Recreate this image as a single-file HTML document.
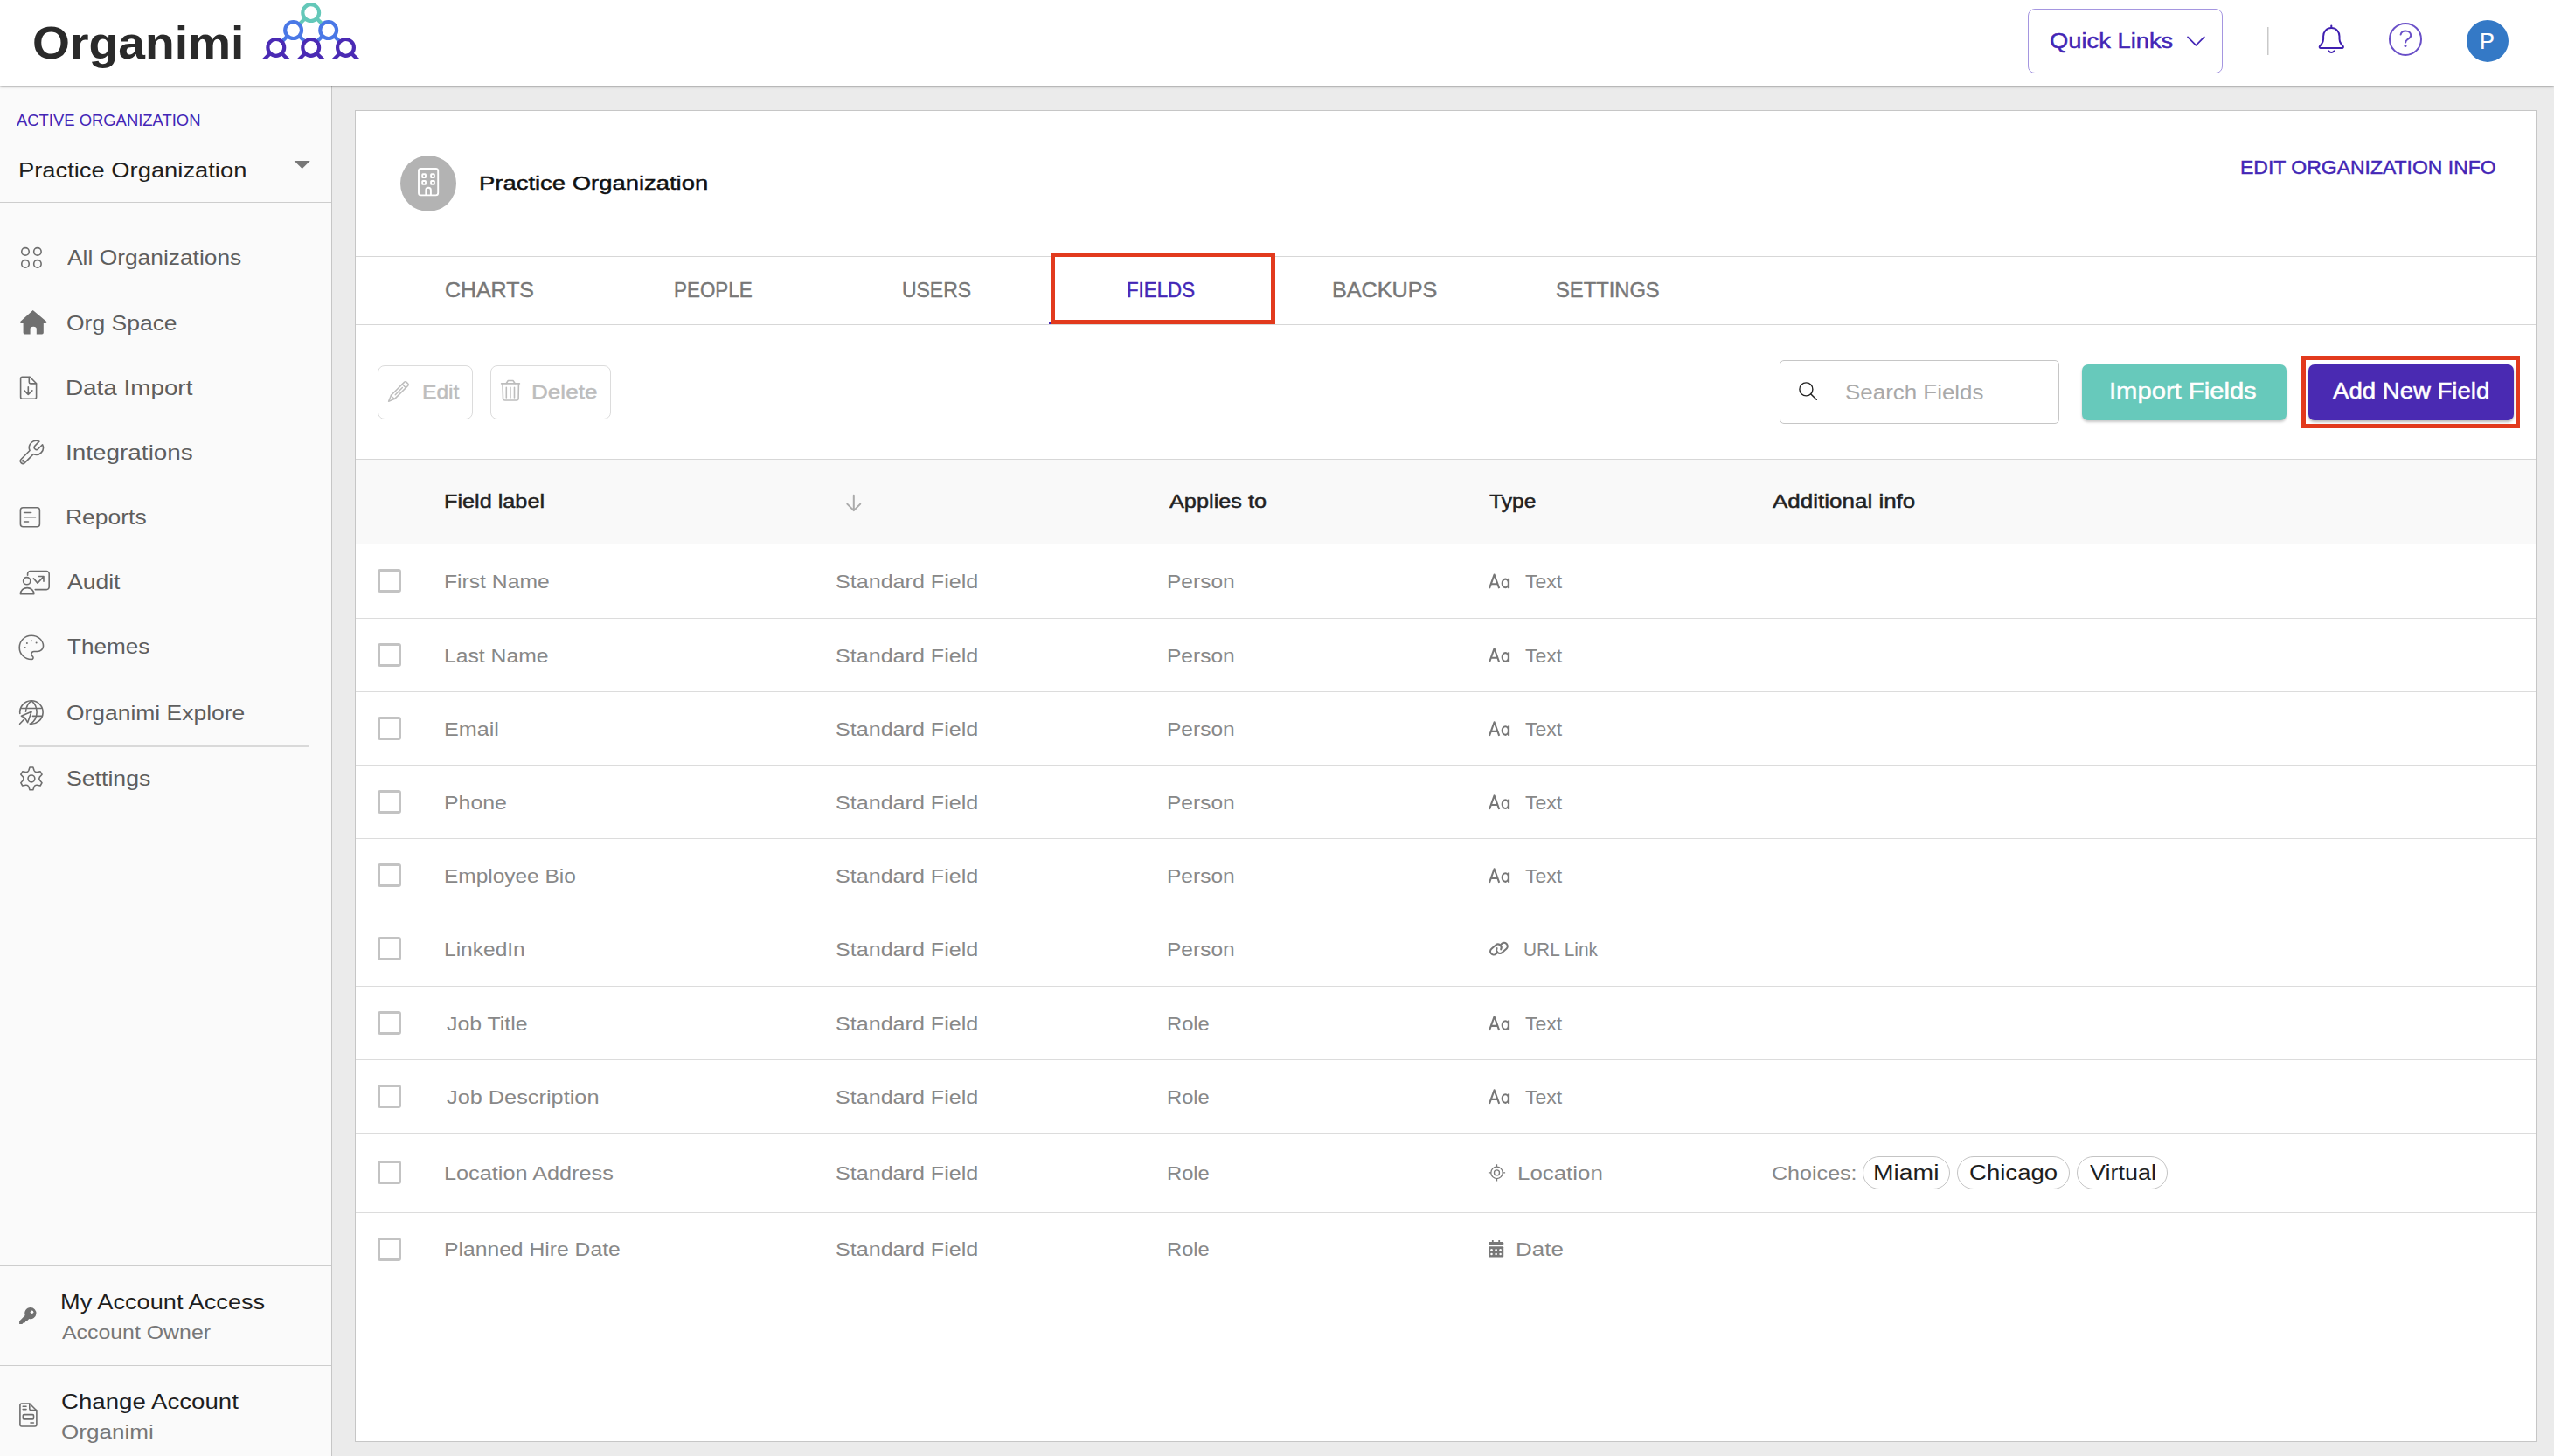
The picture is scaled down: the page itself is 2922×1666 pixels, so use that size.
<!DOCTYPE html><html><head><meta charset="utf-8"><title>Organimi - Fields</title><style>html,body{margin:0;padding:0}body{width:2922px;height:1666px;overflow:hidden;position:relative;background:#ebebeb;font-family:"Liberation Sans",sans-serif}.t{position:absolute;line-height:1;white-space:nowrap;transform-origin:0 0}</style></head><body><div style="position:absolute;left:0.0px;top:98.0px;width:379.0px;height:1568.0px;background:#fafafa;border-right:1px solid #c6c6c6;"></div><div style="position:absolute;left:0.0px;top:231.0px;width:379.0px;height:1.0px;background:#cdcdcd;"></div><div style="position:absolute;left:22.0px;top:853.0px;width:331.0px;height:1.5px;background:#d9d9d9;"></div><div style="position:absolute;left:0.0px;top:1448.0px;width:379.0px;height:1.0px;background:#cdcdcd;"></div><div style="position:absolute;left:0.0px;top:1562.0px;width:379.0px;height:1.0px;background:#cdcdcd;"></div><div style="position:absolute;left:406.0px;top:126.0px;width:2496.0px;height:1524.0px;box-sizing:border-box;background:#fff;border:1px solid #c6c6c6;"></div><div style="position:absolute;left:407.0px;top:293.0px;width:2494.0px;height:1.0px;background:#d7d7d7;"></div><div style="position:absolute;left:407.0px;top:371.0px;width:2494.0px;height:1.0px;background:#d7d7d7;"></div><div style="position:absolute;left:1200.0px;top:368.0px;width:256.0px;height:3.0px;background:#4326b6;"></div><div style="position:absolute;left:458.0px;top:178.0px;width:64.0px;height:64.0px;border-radius:50%;background:#b3b3b3;"></div><div style="position:absolute;left:432.0px;top:418.0px;width:109.0px;height:62.0px;box-sizing:border-box;border:1.5px solid #dcdcdc;border-radius:8px;"></div><div style="position:absolute;left:561.0px;top:418.0px;width:138.0px;height:62.0px;box-sizing:border-box;border:1.5px solid #dcdcdc;border-radius:8px;"></div><div style="position:absolute;left:2036.0px;top:412.0px;width:320.0px;height:73.0px;box-sizing:border-box;border:1.5px solid #c6c6c6;border-radius:5px;"></div><div style="position:absolute;left:2382.0px;top:417.0px;width:234.0px;height:64.0px;background:#67c9bb;border-radius:7px;box-shadow:0 2px 3px rgba(0,0,0,.22);"></div><div style="position:absolute;left:2641.0px;top:417.0px;width:235.0px;height:64.0px;background:#4a2ab2;border-radius:7px;box-shadow:0 2px 3px rgba(0,0,0,.28);"></div><div style="position:absolute;left:407.0px;top:525.0px;width:2494.0px;height:96.0px;background:#f9f9f9;border-top:1px solid #d7d7d7;border-bottom:1px solid #d7d7d7;"></div><div style="position:absolute;left:407.0px;top:707.0px;width:2494.0px;height:1.0px;background:#dcdcdc;"></div><div style="position:absolute;left:407.0px;top:791.0px;width:2494.0px;height:1.0px;background:#dcdcdc;"></div><div style="position:absolute;left:407.0px;top:875.0px;width:2494.0px;height:1.0px;background:#dcdcdc;"></div><div style="position:absolute;left:407.0px;top:959.0px;width:2494.0px;height:1.0px;background:#dcdcdc;"></div><div style="position:absolute;left:407.0px;top:1043.0px;width:2494.0px;height:1.0px;background:#dcdcdc;"></div><div style="position:absolute;left:407.0px;top:1128.0px;width:2494.0px;height:1.0px;background:#dcdcdc;"></div><div style="position:absolute;left:407.0px;top:1212.0px;width:2494.0px;height:1.0px;background:#dcdcdc;"></div><div style="position:absolute;left:407.0px;top:1296.0px;width:2494.0px;height:1.0px;background:#dcdcdc;"></div><div style="position:absolute;left:407.0px;top:1387.0px;width:2494.0px;height:1.0px;background:#dcdcdc;"></div><div style="position:absolute;left:407.0px;top:1471.0px;width:2494.0px;height:1.0px;background:#dcdcdc;"></div><div style="position:absolute;left:432.0px;top:651.1px;width:27.0px;height:27.0px;box-sizing:border-box;border:3px solid #c3c3c3;border-radius:3px;"></div><div style="position:absolute;left:432.0px;top:735.7px;width:27.0px;height:27.0px;box-sizing:border-box;border:3px solid #c3c3c3;border-radius:3px;"></div><div style="position:absolute;left:432.0px;top:819.8px;width:27.0px;height:27.0px;box-sizing:border-box;border:3px solid #c3c3c3;border-radius:3px;"></div><div style="position:absolute;left:432.0px;top:904.0px;width:27.0px;height:27.0px;box-sizing:border-box;border:3px solid #c3c3c3;border-radius:3px;"></div><div style="position:absolute;left:432.0px;top:987.8px;width:27.0px;height:27.0px;box-sizing:border-box;border:3px solid #c3c3c3;border-radius:3px;"></div><div style="position:absolute;left:432.0px;top:1072.2px;width:27.0px;height:27.0px;box-sizing:border-box;border:3px solid #c3c3c3;border-radius:3px;"></div><div style="position:absolute;left:432.0px;top:1156.8px;width:27.0px;height:27.0px;box-sizing:border-box;border:3px solid #c3c3c3;border-radius:3px;"></div><div style="position:absolute;left:432.0px;top:1240.8px;width:27.0px;height:27.0px;box-sizing:border-box;border:3px solid #c3c3c3;border-radius:3px;"></div><div style="position:absolute;left:432.0px;top:1328.2px;width:27.0px;height:27.0px;box-sizing:border-box;border:3px solid #c3c3c3;border-radius:3px;"></div><div style="position:absolute;left:432.0px;top:1415.7px;width:27.0px;height:27.0px;box-sizing:border-box;border:3px solid #c3c3c3;border-radius:3px;"></div><div style="position:absolute;left:2131.0px;top:1323.0px;width:99.6px;height:38.0px;box-sizing:border-box;border:1px solid #c4c4c4;border-radius:19px;"></div><div style="position:absolute;left:2239.0px;top:1323.0px;width:128.8px;height:38.0px;box-sizing:border-box;border:1px solid #c4c4c4;border-radius:19px;"></div><div style="position:absolute;left:2376.0px;top:1323.0px;width:104.0px;height:38.0px;box-sizing:border-box;border:1px solid #c4c4c4;border-radius:19px;"></div><div style="position:absolute;left:0.0px;top:0.0px;width:2922.0px;height:98.0px;background:#fff;box-shadow:0 1px 3px rgba(0,0,0,.35);"></div><div style="position:absolute;left:2320.0px;top:10.0px;width:223.0px;height:74.0px;box-sizing:border-box;border:1.5px solid #a596e0;border-radius:8px;"></div><div class="t" style="left:36.86px;top:24.40px;font-size:51.50px;color:#2a2a2a;font-weight:700;transform:scaleX(1.0724);">Organimi</div><div class="t" style="left:2344.89px;top:34.90px;font-size:24.60px;color:#4326b6;-webkit-text-stroke:0.45px #4326b6;transform:scaleX(1.1111);">Quick Links</div><div class="t" style="left:19.00px;top:128.80px;font-size:18.70px;color:#4326b6;transform:scaleX(0.9858);">ACTIVE ORGANIZATION</div><div class="t" style="left:20.64px;top:183.80px;font-size:23.20px;color:#1e1e1e;transform:scaleX(1.1789);">Practice Organization</div><div class="t" style="left:77.00px;top:283.90px;font-size:23.20px;color:#5e5e5e;transform:scaleX(1.1371);">All Organizations</div><div class="t" style="left:75.86px;top:358.70px;font-size:23.20px;color:#5e5e5e;transform:scaleX(1.1422);">Org Space</div><div class="t" style="left:74.60px;top:432.90px;font-size:23.20px;color:#5e5e5e;transform:scaleX(1.2000);">Data Import</div><div class="t" style="left:74.59px;top:507.00px;font-size:23.20px;color:#5e5e5e;transform:scaleX(1.2034);">Integrations</div><div class="t" style="left:74.72px;top:581.00px;font-size:23.20px;color:#5e5e5e;transform:scaleX(1.1410);">Reports</div><div class="t" style="left:77.00px;top:655.20px;font-size:23.20px;color:#5e5e5e;transform:scaleX(1.1434);">Audit</div><div class="t" style="left:77.00px;top:729.20px;font-size:23.20px;color:#5e5e5e;transform:scaleX(1.1265);">Themes</div><div class="t" style="left:75.86px;top:804.70px;font-size:23.20px;color:#5e5e5e;transform:scaleX(1.1401);">Organimi Explore</div><div class="t" style="left:75.85px;top:880.20px;font-size:23.20px;color:#5e5e5e;transform:scaleX(1.1500);">Settings</div><div class="t" style="left:68.58px;top:1479.00px;font-size:23.40px;color:#1e1e1e;transform:scaleX(1.1623);">My Account Access</div><div class="t" style="left:70.60px;top:1513.70px;font-size:21.20px;color:#777777;transform:scaleX(1.1738);">Account Owner</div><div class="t" style="left:70.12px;top:1593.00px;font-size:23.40px;color:#1e1e1e;transform:scaleX(1.1819);">Change Account</div><div class="t" style="left:70.07px;top:1627.60px;font-size:21.20px;color:#777777;transform:scaleX(1.2298);">Organimi</div><div class="t" style="left:547.80px;top:197.70px;font-size:22.90px;color:#111111;-webkit-text-stroke:0.45px #111111;transform:scaleX(1.1982);">Practice Organization</div><div class="t" style="left:2562.78px;top:180.80px;font-size:22.60px;color:#4326b6;-webkit-text-stroke:0.45px #4326b6;transform:scaleX(1.0168);">EDIT ORGANIZATION INFO</div><div class="t" style="left:508.79px;top:319.80px;font-size:24.70px;color:#777777;-webkit-text-stroke:0.45px #777777;transform:scaleX(1.0091);">CHARTS</div><div class="t" style="left:770.69px;top:319.80px;font-size:24.70px;color:#777777;-webkit-text-stroke:0.45px #777777;transform:scaleX(0.9073);">PEOPLE</div><div class="t" style="left:1031.94px;top:319.80px;font-size:24.70px;color:#777777;-webkit-text-stroke:0.45px #777777;transform:scaleX(0.9293);">USERS</div><div class="t" style="left:1288.60px;top:319.80px;font-size:24.70px;color:#4326b6;-webkit-text-stroke:0.45px #4326b6;transform:scaleX(0.9024);">FIELDS</div><div class="t" style="left:1523.56px;top:319.80px;font-size:24.70px;color:#777777;-webkit-text-stroke:0.45px #777777;transform:scaleX(1.0200);">BACKUPS</div><div class="t" style="left:1780.24px;top:319.80px;font-size:24.70px;color:#777777;-webkit-text-stroke:0.45px #777777;transform:scaleX(0.9615);">SETTINGS</div><div class="t" style="left:483.13px;top:436.80px;font-size:22.90px;color:#bdbdbd;-webkit-text-stroke:0.45px #bdbdbd;transform:scaleX(1.0744);">Edit</div><div class="t" style="left:607.86px;top:436.80px;font-size:22.90px;color:#bdbdbd;-webkit-text-stroke:0.45px #bdbdbd;transform:scaleX(1.1400);">Delete</div><div class="t" style="left:2110.71px;top:437.80px;font-size:23.70px;color:#a9a9a9;transform:scaleX(1.0944);">Search Fields</div><div class="t" style="left:2413.31px;top:435.00px;font-size:25.50px;color:#ffffff;-webkit-text-stroke:0.45px #ffffff;transform:scaleX(1.1448);">Import Fields</div><div class="t" style="left:2669.10px;top:435.00px;font-size:25.50px;color:#ffffff;-webkit-text-stroke:0.45px #ffffff;transform:scaleX(1.0812);">Add New Field</div><div class="t" style="left:508.44px;top:562.80px;font-size:21.70px;color:#222222;-webkit-text-stroke:0.45px #222222;transform:scaleX(1.1639);">Field label</div><div class="t" style="left:1338.00px;top:562.80px;font-size:21.70px;color:#222222;-webkit-text-stroke:0.45px #222222;transform:scaleX(1.1663);">Applies to</div><div class="t" style="left:1703.60px;top:562.80px;font-size:21.70px;color:#222222;-webkit-text-stroke:0.45px #222222;transform:scaleX(1.1340);">Type</div><div class="t" style="left:2028.00px;top:562.80px;font-size:21.70px;color:#222222;-webkit-text-stroke:0.45px #222222;transform:scaleX(1.1985);">Additional info</div><div class="t" style="left:508.37px;top:654.95px;font-size:22.10px;color:#888888;transform:scaleX(1.1171);">First Name</div><div class="t" style="left:955.86px;top:654.95px;font-size:22.10px;color:#888888;transform:scaleX(1.1359);">Standard Field</div><div class="t" style="left:1335.38px;top:654.95px;font-size:22.10px;color:#888888;transform:scaleX(1.1104);">Person</div><div class="t" style="left:1744.60px;top:654.95px;font-size:22.10px;color:#888888;transform:scaleX(1.0415);">Text</div><div class="t" style="left:508.36px;top:739.50px;font-size:22.10px;color:#888888;transform:scaleX(1.1192);">Last Name</div><div class="t" style="left:955.86px;top:739.50px;font-size:22.10px;color:#888888;transform:scaleX(1.1359);">Standard Field</div><div class="t" style="left:1335.38px;top:739.50px;font-size:22.10px;color:#888888;transform:scaleX(1.1104);">Person</div><div class="t" style="left:1744.60px;top:739.50px;font-size:22.10px;color:#888888;transform:scaleX(1.0415);">Text</div><div class="t" style="left:508.32px;top:823.60px;font-size:22.10px;color:#888888;transform:scaleX(1.1385);">Email</div><div class="t" style="left:955.86px;top:823.60px;font-size:22.10px;color:#888888;transform:scaleX(1.1359);">Standard Field</div><div class="t" style="left:1335.38px;top:823.60px;font-size:22.10px;color:#888888;transform:scaleX(1.1104);">Person</div><div class="t" style="left:1744.60px;top:823.60px;font-size:22.10px;color:#888888;transform:scaleX(1.0415);">Text</div><div class="t" style="left:508.35px;top:907.75px;font-size:22.10px;color:#888888;transform:scaleX(1.1246);">Phone</div><div class="t" style="left:955.86px;top:907.75px;font-size:22.10px;color:#888888;transform:scaleX(1.1359);">Standard Field</div><div class="t" style="left:1335.38px;top:907.75px;font-size:22.10px;color:#888888;transform:scaleX(1.1104);">Person</div><div class="t" style="left:1744.60px;top:907.75px;font-size:22.10px;color:#888888;transform:scaleX(1.0415);">Text</div><div class="t" style="left:508.39px;top:991.60px;font-size:22.10px;color:#888888;transform:scaleX(1.1060);">Employee Bio</div><div class="t" style="left:955.86px;top:991.60px;font-size:22.10px;color:#888888;transform:scaleX(1.1359);">Standard Field</div><div class="t" style="left:1335.38px;top:991.60px;font-size:22.10px;color:#888888;transform:scaleX(1.1104);">Person</div><div class="t" style="left:1744.60px;top:991.60px;font-size:22.10px;color:#888888;transform:scaleX(1.0415);">Text</div><div class="t" style="left:508.38px;top:1076.00px;font-size:22.10px;color:#888888;transform:scaleX(1.1100);">LinkedIn</div><div class="t" style="left:955.86px;top:1076.00px;font-size:22.10px;color:#888888;transform:scaleX(1.1359);">Standard Field</div><div class="t" style="left:1335.38px;top:1076.00px;font-size:22.10px;color:#888888;transform:scaleX(1.1104);">Person</div><div class="t" style="left:1743.01px;top:1076.00px;font-size:22.10px;color:#888888;transform:scaleX(0.9443);">URL Link</div><div class="t" style="left:510.60px;top:1160.60px;font-size:22.10px;color:#888888;transform:scaleX(1.1259);">Job Title</div><div class="t" style="left:955.86px;top:1160.60px;font-size:22.10px;color:#888888;transform:scaleX(1.1359);">Standard Field</div><div class="t" style="left:1335.45px;top:1160.60px;font-size:22.10px;color:#888888;transform:scaleX(1.0744);">Role</div><div class="t" style="left:1744.60px;top:1160.60px;font-size:22.10px;color:#888888;transform:scaleX(1.0415);">Text</div><div class="t" style="left:510.60px;top:1244.65px;font-size:22.10px;color:#888888;transform:scaleX(1.1457);">Job Description</div><div class="t" style="left:955.86px;top:1244.65px;font-size:22.10px;color:#888888;transform:scaleX(1.1359);">Standard Field</div><div class="t" style="left:1335.45px;top:1244.65px;font-size:22.10px;color:#888888;transform:scaleX(1.0744);">Role</div><div class="t" style="left:1744.60px;top:1244.65px;font-size:22.10px;color:#888888;transform:scaleX(1.0415);">Text</div><div class="t" style="left:508.31px;top:1332.05px;font-size:22.10px;color:#888888;transform:scaleX(1.1437);">Location Address</div><div class="t" style="left:955.86px;top:1332.05px;font-size:22.10px;color:#888888;transform:scaleX(1.1359);">Standard Field</div><div class="t" style="left:1335.45px;top:1332.05px;font-size:22.10px;color:#888888;transform:scaleX(1.0744);">Role</div><div class="t" style="left:1736.46px;top:1332.05px;font-size:22.10px;color:#888888;transform:scaleX(1.1713);">Location</div><div class="t" style="left:508.37px;top:1419.45px;font-size:22.10px;color:#888888;transform:scaleX(1.1174);">Planned Hire Date</div><div class="t" style="left:955.86px;top:1419.45px;font-size:22.10px;color:#888888;transform:scaleX(1.1359);">Standard Field</div><div class="t" style="left:1335.45px;top:1419.45px;font-size:22.10px;color:#888888;transform:scaleX(1.0744);">Role</div><div class="t" style="left:1733.95px;top:1419.45px;font-size:22.10px;color:#888888;transform:scaleX(1.1750);">Date</div><div class="t" style="left:2027.08px;top:1332.05px;font-size:22.30px;color:#888888;transform:scaleX(1.1250);">Choices:</div><div class="t" style="left:2143.49px;top:1331.05px;font-size:23.50px;color:#1e1e1e;transform:scaleX(1.2034);">Miami</div><div class="t" style="left:2252.53px;top:1331.05px;font-size:23.50px;color:#1e1e1e;transform:scaleX(1.1729);">Chicago</div><div class="t" style="left:2390.80px;top:1331.05px;font-size:23.50px;color:#1e1e1e;transform:scaleX(1.1462);">Virtual</div><div style="position:absolute;left:1202.0px;top:289.0px;width:256.5px;height:82.0px;box-sizing:border-box;border:5px solid #e23a1d;"></div><div style="position:absolute;left:2633.0px;top:407.0px;width:250.0px;height:83.0px;box-sizing:border-box;border:5px solid #e23a1d;"></div><svg style="position:absolute;left:0;top:0" width="2922" height="1666" viewBox="0 0 2922 1666"><g stroke-linecap="butt"><defs><clipPath id="lc"><rect x="280" y="0" width="150" height="68.1"/></clipPath></defs><g clip-path="url(#lc)"><line x1="355.7" y1="14.6" x2="335.6" y2="34.6" stroke="#64c8b9" stroke-width="4.2"/><line x1="355.7" y1="14.6" x2="375.7" y2="34.6" stroke="#64c8b9" stroke-width="4.2"/><line x1="335.6" y1="34.6" x2="315.8" y2="54.4" stroke="#4a78e6" stroke-width="4.2"/><line x1="335.6" y1="34.6" x2="355.7" y2="54.4" stroke="#4a78e6" stroke-width="4.2"/><line x1="375.7" y1="34.6" x2="355.7" y2="54.4" stroke="#4a78e6" stroke-width="4.2"/><line x1="375.7" y1="34.6" x2="395.5" y2="54.4" stroke="#4a78e6" stroke-width="4.2"/><line x1="315.8" y1="54.4" x2="295.8" y2="74.4" stroke="#4a2ab4" stroke-width="4.2"/><line x1="315.8" y1="54.4" x2="335.8" y2="74.4" stroke="#4a2ab4" stroke-width="4.2"/><line x1="355.7" y1="54.4" x2="335.7" y2="74.4" stroke="#4a2ab4" stroke-width="4.2"/><line x1="355.7" y1="54.4" x2="375.7" y2="74.4" stroke="#4a2ab4" stroke-width="4.2"/><line x1="395.5" y1="54.4" x2="375.5" y2="74.4" stroke="#4a2ab4" stroke-width="4.2"/><line x1="395.5" y1="54.4" x2="415.5" y2="74.4" stroke="#4a2ab4" stroke-width="4.2"/><circle cx="355.7" cy="14.6" r="9.4" fill="#fff" stroke="#64c8b9" stroke-width="4.2"/><circle cx="335.6" cy="34.6" r="9.4" fill="#fff" stroke="#4a78e6" stroke-width="4.2"/><circle cx="375.7" cy="34.6" r="9.4" fill="#fff" stroke="#4a78e6" stroke-width="4.2"/><circle cx="315.8" cy="54.4" r="9.4" fill="#fff" stroke="#4a2ab4" stroke-width="4.2"/><circle cx="355.7" cy="54.4" r="9.4" fill="#fff" stroke="#4a2ab4" stroke-width="4.2"/><circle cx="395.5" cy="54.4" r="9.4" fill="#fff" stroke="#4a2ab4" stroke-width="4.2"/></g></g><polyline points="2503,42.3 2512.4,51.8 2521.8,42.3" fill="none" stroke="#4326b6" stroke-width="1.7" stroke-linecap="round" stroke-linejoin="round"/><rect x="2594" y="31" width="1.5" height="32" fill="#c9c9c9"/><g fill="none" stroke="#3f1fb0" stroke-width="2" stroke-linecap="round" stroke-linejoin="round"><path d="M2667.3,29.6 v2.2"/><path d="M2667.3,32 c-5.6,0 -9.2,4.3 -9.2,9.6 v3.2 c0,2.2 -0.8,4.1 -2.1,5.7 l-2,2.4 c-0.7,0.9 -0.1,2.2 1,2.2 h24.6 c1.1,0 1.7,-1.3 1,-2.2 l-2,-2.4 c-1.3,-1.6 -2.1,-3.5 -2.1,-5.7 v-3.2 c0,-5.3 -3.6,-9.6 -9.2,-9.6 z"/><path d="M2664.2,58.4 q3.1,3.4 6.3,0"/></g><circle cx="2752" cy="44.9" r="18" fill="none" stroke="#6a50c8" stroke-width="2"/><path d="M2746.6,39.6 c0.6,-2.6 2.9,-4.1 5.6,-4.1 c3.3,0 6,2.1 6,4.9 c0,2.6 -2.2,3.7 -3.9,4.8 c-1.3,0.9 -2.1,1.7 -2.1,3.4" fill="none" stroke="#6a50c8" stroke-width="2" stroke-linecap="round"/><circle cx="2752" cy="52.6" r="1.5" fill="#6a50c8"/><circle cx="2846" cy="46.9" r="24" fill="#3479c6"/><g fill="none" stroke="#6e6e6e" stroke-width="1.6" stroke-linecap="round" stroke-linejoin="round"><circle cx="29.0" cy="287.9" r="4.25"/><circle cx="29.0" cy="301.9" r="4.25"/><circle cx="42.9" cy="287.9" r="4.25"/><circle cx="42.9" cy="301.9" r="4.25"/><path d="M25.6,431.3 h8.6 l7.4,7.4 v15.6 a2,2 0 0 1 -2,2 h-14 a2,2 0 0 1 -2,-2 v-21 a2,2 0 0 1 2,-2 z"/><path d="M33.3,431.5 v5.8 a1.6,1.6 0 0 0 1.6,1.6 h6.5"/><path d="M32.3,442.8 v8.6 M27.9,446.9 l4.4,4.6 l4.6,-4.6"/><path d="M48.59,508.79 A8,8 0 0 1 38.18,519.63 L28.25,529.65 A2.9,2.9 0 0 1 24.15,525.55 L34.07,515.52 A8,8 0 0 1 44.91,505.11 L39.96,510.06 A2.6,2.6 0 0 0 43.64,513.74 Z"/><circle cx="26.5" cy="527.2" r="0.7" fill="#6e6e6e"/><rect x="23.4" y="580.8" width="22" height="22" rx="3"/><path d="M27.6,586.5 h8 M27.6,591.8 h13 M27.6,597 h4.9"/><path d="M31.6,658.2 v-1.6 a3,3 0 0 1 3,-3 h18.6 a3,3 0 0 1 3,3 v15 a3,3 0 0 1 -3,3 h-13"/><circle cx="30.7" cy="664.7" r="4.1"/><path d="M23.4,679.8 a7.7,7.2 0 0 1 15.4,0 z"/><path d="M38.4,661.9 l4.6,5.2 l6.9,-7.3 M44.4,659.5 h5.6 v5.8"/><g transform="translate(17.64,722.64) scale(1.520)" stroke-width="1.053"><path d="M12 21a9 9 0 0 1 0 -18c4.97 0 9 3.582 9 8c0 1.06 -.474 2.078 -1.318 2.828c-.844 .75 -1.989 1.172 -3.182 1.172h-2.5a2 2 0 0 0 -1 3.75a1.3 1.3 0 0 1 -1 2.25"/></g><circle cx="28.7" cy="740.9" r="1" fill="#6e6e6e" stroke="none"/><circle cx="30.9" cy="735.9" r="1" fill="#6e6e6e" stroke="none"/><circle cx="35.9" cy="733.3" r="1" fill="#6e6e6e" stroke="none"/><circle cx="41.6" cy="735.6" r="1" fill="#6e6e6e" stroke="none"/><path d="M22.8,816.5 A13.2,13.2 0 1 1 34.2,828.1"/><path d="M23.9,810.5 H47.4 M37.5,819.4 H47.4"/><path d="M36,801.8 C32,804.6 29.8,809.5 29.5,814.3"/><path d="M36,801.8 C40.2,805 42.1,810 42.1,815 C42.1,820.2 39.8,825 35.3,828.1"/><path d="M36.05,814.3 L24.4,819.3 L28.4,821.2 L31.6,826.7 Z"/><path d="M27.9,822.7 L22.6,828.3"/><path d="M32.77,881.76 L34.01,878.07 L37.85,878.07 L39.09,881.76 Q40.03,883.83 42.29,883.61 L46.10,882.84 L48.03,886.17 L45.45,889.08 Q44.13,890.93 45.45,892.78 L48.03,895.69 L46.10,899.02 L42.29,898.25 Q40.03,898.03 39.09,900.10 L37.85,903.79 L34.01,903.79 L32.77,900.10 Q31.83,898.03 29.57,898.25 L25.76,899.02 L23.83,895.69 L26.41,892.78 Q27.73,890.93 26.41,889.08 L23.83,886.17 L25.76,882.84 L29.57,883.61 Q31.83,883.83 32.77,881.76 Z"/><circle cx="35.93" cy="890.93" r="3.9"/><path d="M24.9,1606 h9 l8,8 v16 a2,2 0 0 1 -2,2 h-15 a2,2 0 0 1 -2,-2 v-22 a2,2 0 0 1 2,-2 z"/><path d="M33.8,1606.2 v5.8 a1.6,1.6 0 0 0 1.6,1.6 h6.3"/><path d="M26.2,1609.2 h3.8 M26.2,1612.6 h3.8 M35,1628 h3.4"/><rect x="26.3" y="1618.6" width="12.2" height="5.3" rx="1.2"/></g><path d="M37.7,355 L53.2,368 q0.8,1.6 -0.8,2 h-2.6 v10.8 q0,1.8 -1.8,1.8 h-6.2 v-6.4 q0,-2.5 -3.6,-2.5 q-3.6,0 -3.6,2.5 v6.4 h-6.2 q-1.8,0 -1.8,-1.8 v-10.8 h-2.6 q-1.6,-0.4 -0.8,-2 z" fill="#707070"/><path d="M34.8,1496 a6.6,6.6 0 1 1 -1.5,13 l-2.2,2.2 h-2 v2 h-2 l-1.8,1.8 h-3.2 v-3.3 l6.6,-6.6 a6.6,6.6 0 0 1 6.1,-9.1 z" fill="#707070"/><circle cx="36.5" cy="1501.3" r="1.8" fill="#fafafa"/><path d="M336.6,184 h18.2 l-9.1,9.1 z" fill="#777"/><g fill="none" stroke="#fff" stroke-width="1.9"><rect x="479" y="193" width="22.2" height="30.4" rx="2.6"/><rect x="483.2" y="199.3" width="3.8" height="3.8" rx="0.6"/><rect x="493.1" y="199.3" width="3.8" height="3.8" rx="0.6"/><rect x="483.2" y="207.0" width="3.8" height="3.8" rx="0.6"/><rect x="493.1" y="207.0" width="3.8" height="3.8" rx="0.6"/><path d="M487.3,223 v-5.5 a2.8,2.8 0 0 1 5.6,0 v5.5"/></g><g fill="none" stroke="#bdbdbd" stroke-width="1.5" stroke-linejoin="round" stroke-linecap="round" transform="translate(444.6 459.3) rotate(-45)"><path d="M0,0 L7,-2.9 H28.5 A1.5,1.5 0 0 1 30,-1.4 V1.4 A1.5,1.5 0 0 1 28.5,2.9 H7 Z"/><path d="M7,-2.9 Q5.6,0 7,2.9 M25,-2.9 V2.9 M10.8,0 H22.3"/></g><g fill="none" stroke="#bdbdbd" stroke-width="1.6" stroke-linejoin="round" stroke-linecap="round"><path d="M573.6,438.9 h20.8"/><path d="M579.1,438.7 L581.3,435.5 H587 L589.2,438.7"/><path d="M575,439.2 L575.5,456 a2.2,2.2 0 0 0 2.2,2 h13.2 a2.2,2.2 0 0 0 2.2,-2 L593.4,439.2"/><path d="M579.3,443.3 v11.7 M583.9,443.3 v11.7 M588.5,443.3 v11.7"/></g><circle cx="2066.4" cy="445.4" r="7.5" fill="none" stroke="#222" stroke-width="1.4"/><path d="M2071.9,451 l6.4,6.2" stroke="#222" stroke-width="1.5" stroke-linecap="round"/><path d="M976.8,566.8 v17 M969.3,576.6 l7.5,7.5 l7.5,-7.5" fill="none" stroke="#ababab" stroke-width="2" stroke-linecap="round" stroke-linejoin="round"/><g fill="none" stroke="#777" stroke-width="2.1" stroke-linejoin="round" transform="translate(0 0.00)"><path d="M1704,673.2 L1709.6,657.6 L1715.2,673.2 M1706.2,668.2 H1713"/><ellipse cx="1722.3" cy="667.4" rx="3.6" ry="4.8"/><path d="M1726.1,661.8 V673.2"/></g><g fill="none" stroke="#777" stroke-width="2.1" stroke-linejoin="round" transform="translate(0 84.55)"><path d="M1704,673.2 L1709.6,657.6 L1715.2,673.2 M1706.2,668.2 H1713"/><ellipse cx="1722.3" cy="667.4" rx="3.6" ry="4.8"/><path d="M1726.1,661.8 V673.2"/></g><g fill="none" stroke="#777" stroke-width="2.1" stroke-linejoin="round" transform="translate(0 168.65)"><path d="M1704,673.2 L1709.6,657.6 L1715.2,673.2 M1706.2,668.2 H1713"/><ellipse cx="1722.3" cy="667.4" rx="3.6" ry="4.8"/><path d="M1726.1,661.8 V673.2"/></g><g fill="none" stroke="#777" stroke-width="2.1" stroke-linejoin="round" transform="translate(0 252.80)"><path d="M1704,673.2 L1709.6,657.6 L1715.2,673.2 M1706.2,668.2 H1713"/><ellipse cx="1722.3" cy="667.4" rx="3.6" ry="4.8"/><path d="M1726.1,661.8 V673.2"/></g><g fill="none" stroke="#777" stroke-width="2.1" stroke-linejoin="round" transform="translate(0 336.65)"><path d="M1704,673.2 L1709.6,657.6 L1715.2,673.2 M1706.2,668.2 H1713"/><ellipse cx="1722.3" cy="667.4" rx="3.6" ry="4.8"/><path d="M1726.1,661.8 V673.2"/></g><g fill="none" stroke="#777" stroke-width="2.1" stroke-linejoin="round" transform="translate(0 505.65)"><path d="M1704,673.2 L1709.6,657.6 L1715.2,673.2 M1706.2,668.2 H1713"/><ellipse cx="1722.3" cy="667.4" rx="3.6" ry="4.8"/><path d="M1726.1,661.8 V673.2"/></g><g fill="none" stroke="#777" stroke-width="2.1" stroke-linejoin="round" transform="translate(0 589.70)"><path d="M1704,673.2 L1709.6,657.6 L1715.2,673.2 M1706.2,668.2 H1713"/><ellipse cx="1722.3" cy="667.4" rx="3.6" ry="4.8"/><path d="M1726.1,661.8 V673.2"/></g><g fill="none" stroke="#777" stroke-width="2.1" stroke-linecap="round" transform="translate(1714.9 1085.7) rotate(-41)"><path d="M-5.0,2.2 H-6.4 A3.9,3.9 0 0 1 -6.4,-5.6 H0 A3.9,3.9 0 0 1 1.33,1.96"/><path d="M5.0,-2.2 H6.4 A3.9,3.9 0 0 1 6.4,5.6 H0 A3.9,3.9 0 0 1 -1.33,-1.96"/></g><g fill="none" stroke="#7a7a7a" stroke-width="1.3"><circle cx="1712.5" cy="1341.9" r="6.7"/><circle cx="1712.5" cy="1341.9" r="3.0"/><path d="M1712.5,1332.3 v3 M1712.5,1348.5 v3 M1702.9,1341.9 h3 M1719.1,1341.9 h3"/></g><rect x="1703.1" y="1421.1" width="17.1" height="3.7" rx="1.2" fill="#777"/><rect x="1703.1" y="1426.3" width="17.1" height="12.1" rx="1" fill="#777"/><rect x="1706.9" y="1419" width="1.8" height="3" fill="#777"/><rect x="1714.3" y="1419" width="1.8" height="3" fill="#777"/><circle cx="1706.5" cy="1430.2" r="1.25" fill="#fff"/><circle cx="1706.5" cy="1435.1" r="1.25" fill="#fff"/><circle cx="1711.6" cy="1430.2" r="1.25" fill="#fff"/><circle cx="1711.6" cy="1435.1" r="1.25" fill="#fff"/><circle cx="1716.6" cy="1430.2" r="1.25" fill="#fff"/><circle cx="1716.6" cy="1435.1" r="1.25" fill="#fff"/></svg><div class="t" style="left:2837.01px;top:34.70px;font-size:25.50px;color:#fff;-webkit-text-stroke:0.2px #fff;transform:scaleX(0.9929)">P</div></body></html>
